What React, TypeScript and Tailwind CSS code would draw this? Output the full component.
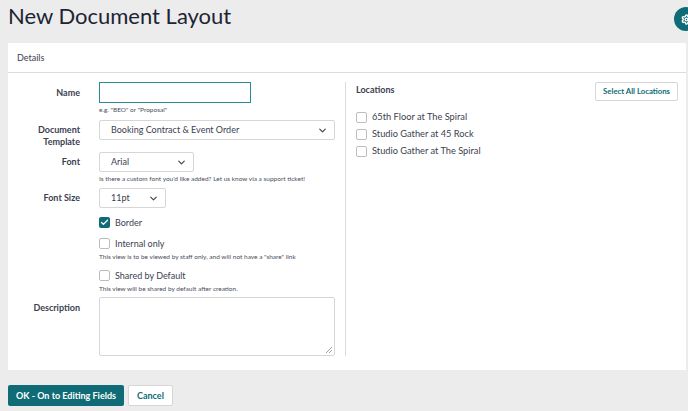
import { Check, ChevronDown, Settings } from "lucide-react";

function Label({ children }: { children: React.ReactNode }) {
  return (
    <div className="w-[72px] shrink-0 text-right text-[9px] font-bold leading-[12px] text-[#3c4150]">
      {children}
    </div>
  );
}

function Select({ value, width }: { value: string; width: string }) {
  return (
    <div
      className={`${width} flex h-[20px] items-center justify-between rounded-[2px] border border-[#d6d6d6] bg-white pl-[11px] pr-[6px] text-[9px] text-[#3c4150]`}
    >
      <span>{value}</span>
      <ChevronDown className="size-[11px] text-[#3c4150]" strokeWidth={2.5} />
    </div>
  );
}

function Box({ checked }: { checked?: boolean }) {
  return checked ? (
    <div className="flex size-[11px] items-center justify-center rounded-[2px] bg-[#0f6c76]">
      <Check className="size-[9px] text-white" strokeWidth={3.5} />
    </div>
  ) : (
    <div className="size-[11px] rounded-[2px] border border-[#bdbdbd] bg-white" />
  );
}

function Help({ children }: { children: React.ReactNode }) {
  return <div className="text-[6.5px] leading-[8px] text-[#4a4f5c]">{children}</div>;
}

export default function App() {
  return (
    <div
      className="relative h-[411px] w-[688px] overflow-hidden bg-[#ececec]"
      style={{ fontFamily: "Lato, 'Open Sans', sans-serif" }}
    >
      <div className="absolute right-[-10px] top-[7px] flex size-[24px] items-center justify-center rounded-full bg-[#0f6c76]">
        <Settings className="size-[11px] text-white" strokeWidth={3} />
      </div>

      <h1 className="px-[8px] pt-[2px] text-[22px] leading-[27px] text-[#1d2433]">New Document Layout</h1>

      <div className="ml-[8px] mr-[2px] mt-[14px] h-[327px] bg-white">
        <div className="flex h-[30px] items-center border-b border-[#dcdcdc] px-[9px] text-[9px] text-[#3c4150]">
          Details
        </div>

        <div className="flex pt-[9px]">
          <div className="w-[338px] shrink-0 border-r border-[#dcdcdc] pr-[10px]">
            <div className="flex gap-[19px]">
              <div className="pt-[5px]">
                <Label>Name</Label>
              </div>
              <div>
                <div className="h-[21px] w-[152px] border border-[#2a8b94] bg-white" />
                <div className="mt-[3px]">
                  <Help>e.g. "BEO" or "Proposal"</Help>
                </div>
              </div>
            </div>

            <div className="mt-[6px] flex gap-[19px]">
              <div className="pt-[4px]">
                <Label>
                  Document
                  <br />
                  Template
                </Label>
              </div>
              <Select value="Booking Contract & Event Order" width="w-[237px]" />
            </div>

            <div className="mt-[4px] flex gap-[19px]">
              <div className="pt-[4px]">
                <Label>Font</Label>
              </div>
              <div>
                <Select value="Arial" width="w-[95px]" />
                <div className="mt-[3px]">
                  <Help>Is there a custom font you'd like added? Let us know via a support ticket!</Help>
                </div>
              </div>
            </div>

            <div className="mt-[5px] flex gap-[19px]">
              <div className="pt-[4px]">
                <Label>Font Size</Label>
              </div>
              <div>
                <Select value="11pt" width="w-[67px]" />

                <div className="mt-[8px] flex items-center gap-[5px] text-[9px] text-[#3c4150]">
                  <Box checked />
                  Border
                </div>
                <div className="mt-[7px] flex items-center gap-[5px] text-[9px] text-[#3c4150]">
                  <Box />
                  Internal only
                </div>
                <div className="mt-[3px]">
                  <Help>This view is to be viewed by staff only, and will not have a "share" link</Help>
                </div>
                <div className="mt-[8px] flex items-center gap-[5px] text-[9px] text-[#3c4150]">
                  <Box />
                  Shared by Default
                </div>
                <div className="mt-[2px]">
                  <Help>This view will be shared by default after creation.</Help>
                </div>
              </div>
            </div>

            <div className="mt-[4px] flex gap-[19px]">
              <div className="pt-[5px]">
                <Label>Description</Label>
              </div>
              <div className="relative h-[59px] w-[238px] rounded-[2px] border border-[#d6d6d6]">
                <svg className="absolute bottom-[2px] right-[2px]" width="6" height="6" viewBox="0 0 6 6">
                  <path d="M6 0L0 6M6 3L3 6" stroke="#888" strokeWidth="0.8" />
                </svg>
              </div>
            </div>
          </div>

          <div className="flex-1 pl-[10px] pr-[8px]">
            <div className="flex items-start justify-between">
              <div className="pt-[1px] text-[9px] font-bold text-[#3c4150]">Locations</div>
              <div className="flex h-[19px] items-center rounded-[2px] border border-[#d6d6d6] px-[7px] text-[7.75px] font-bold text-[#0f6c76]">
                Select All Locations
              </div>
            </div>
            <div className="mt-[10px] flex flex-col gap-[5px]">
              {["65th Floor at The Spiral", "Studio Gather at 45 Rock", "Studio Gather at The Spiral"].map(l => (
                <div key={l} className="flex items-center gap-[5px] text-[9.25px] leading-[12px] text-[#3c4150]">
                  <Box />
                  {l}
                </div>
              ))}
            </div>
          </div>
        </div>
      </div>

      <div className="ml-[8px] mt-[15px] flex gap-[4px]">
        <div className="flex h-[21px] items-center rounded-[2px] bg-[#0f6c76] px-[8px] text-[9px] font-bold text-white">
          OK - On to Editing Fields
        </div>
        <div className="flex h-[21px] items-center rounded-[2px] border border-[#d6d6d6] bg-white px-[8px] text-[9px] font-bold text-[#0f6c76]">
          Cancel
        </div>
      </div>
    </div>
  );
}
